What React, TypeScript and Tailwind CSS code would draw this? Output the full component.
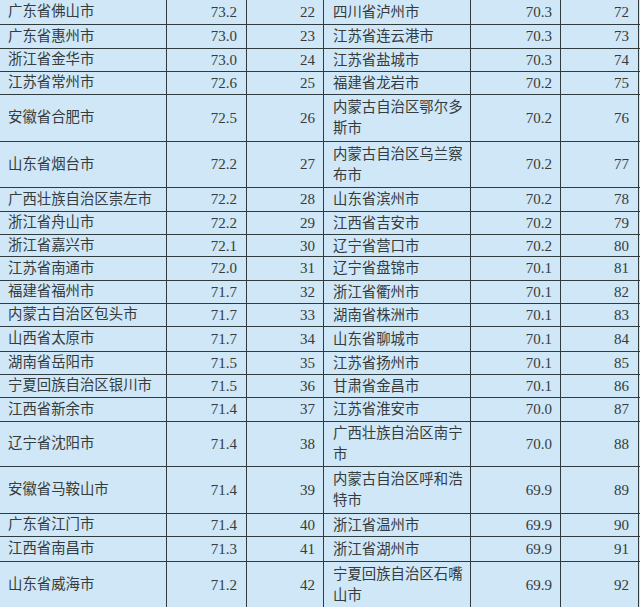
import React from "react";

type Row = { h: number; a: string[]; av: string; ar: string; b: string[]; bv: string; br: string };

const heights = [25, 24, 23, 23, 47, 46, 24, 23, 22, 24, 23, 23, 25, 23, 23, 24, 45, 47, 23, 25, 47];

const left: [string, string, string][] = [
  ["广东省佛山市", "73.2", "22"],
  ["广东省惠州市", "73.0", "23"],
  ["浙江省金华市", "73.0", "24"],
  ["江苏省常州市", "72.6", "25"],
  ["安徽省合肥市", "72.5", "26"],
  ["山东省烟台市", "72.2", "27"],
  ["广西壮族自治区崇左市", "72.2", "28"],
  ["浙江省舟山市", "72.2", "29"],
  ["浙江省嘉兴市", "72.1", "30"],
  ["江苏省南通市", "72.0", "31"],
  ["福建省福州市", "71.7", "32"],
  ["内蒙古自治区包头市", "71.7", "33"],
  ["山西省太原市", "71.7", "34"],
  ["湖南省岳阳市", "71.5", "35"],
  ["宁夏回族自治区银川市", "71.5", "36"],
  ["江西省新余市", "71.4", "37"],
  ["辽宁省沈阳市", "71.4", "38"],
  ["安徽省马鞍山市", "71.4", "39"],
  ["广东省江门市", "71.4", "40"],
  ["江西省南昌市", "71.3", "41"],
  ["山东省威海市", "71.2", "42"],
];

const right: [string[], string, string][] = [
  [["四川省泸州市"], "70.3", "72"],
  [["江苏省连云港市"], "70.3", "73"],
  [["江苏省盐城市"], "70.3", "74"],
  [["福建省龙岩市"], "70.2", "75"],
  [["内蒙古自治区鄂尔多", "斯市"], "70.2", "76"],
  [["内蒙古自治区乌兰察", "布市"], "70.2", "77"],
  [["山东省滨州市"], "70.2", "78"],
  [["江西省吉安市"], "70.2", "79"],
  [["辽宁省营口市"], "70.2", "80"],
  [["辽宁省盘锦市"], "70.1", "81"],
  [["浙江省衢州市"], "70.1", "82"],
  [["湖南省株洲市"], "70.1", "83"],
  [["山东省聊城市"], "70.1", "84"],
  [["江苏省扬州市"], "70.1", "85"],
  [["甘肃省金昌市"], "70.1", "86"],
  [["江苏省淮安市"], "70.0", "87"],
  [["广西壮族自治区南宁", "市"], "70.0", "88"],
  [["内蒙古自治区呼和浩", "特市"], "69.9", "89"],
  [["浙江省温州市"], "69.9", "90"],
  [["浙江省湖州市"], "69.9", "91"],
  [["宁夏回族自治区石嘴", "山市"], "69.9", "92"],
];

const cjk = "[font-family:'Liberation_Serif','Noto_Sans_CJK_SC',serif]";

export default function App() {
  return (
    <div className="w-[640px] h-[607px] overflow-hidden bg-[#cfe7f6] text-[#363b3d]">
      {heights.map((h, i) => {
        const [la, lv, lr] = left[i];
        const [rb, rv, rr] = right[i];
        return (
          <div
            key={i}
            style={{ height: h }}
            className="grid grid-cols-[167px_80px_77px_147px_90px_78px_1px] border-b-[1.5px] border-[#2f3b3c]"
          >
            <div className={`flex items-center pl-[8px] text-[14.4px] whitespace-nowrap border-r-[1.5px] border-[#2f3b3c] ${cjk}`}>
              {la}
            </div>
            <div className="flex items-center justify-end pr-[9px] text-[15px] [font-family:'Liberation_Serif',serif] border-r-[1.5px] border-[#2f3b3c]">
              {lv}
            </div>
            <div className="flex items-center justify-end pr-[8px] text-[15px] [font-family:'Liberation_Serif',serif] border-r-[1.5px] border-[#2f3b3c]">
              {lr}
            </div>
            <div className={`flex flex-col justify-center pl-[9px] text-[14.4px] leading-[21px] whitespace-nowrap border-r-[1.5px] border-[#2f3b3c] ${cjk}`}>
              {rb.map((t, j) => (
                <span key={j}>{t}</span>
              ))}
            </div>
            <div className="flex items-center justify-end pr-[8px] text-[15px] [font-family:'Liberation_Serif',serif] border-r-[1.5px] border-[#2f3b3c]">
              {rv}
            </div>
            <div className="flex items-center justify-end pr-[9px] text-[15px] [font-family:'Liberation_Serif',serif] border-r-[1.5px] border-[#2f3b3c]">
              {rr}
            </div>
            <div />
          </div>
        );
      })}
    </div>
  );
}
